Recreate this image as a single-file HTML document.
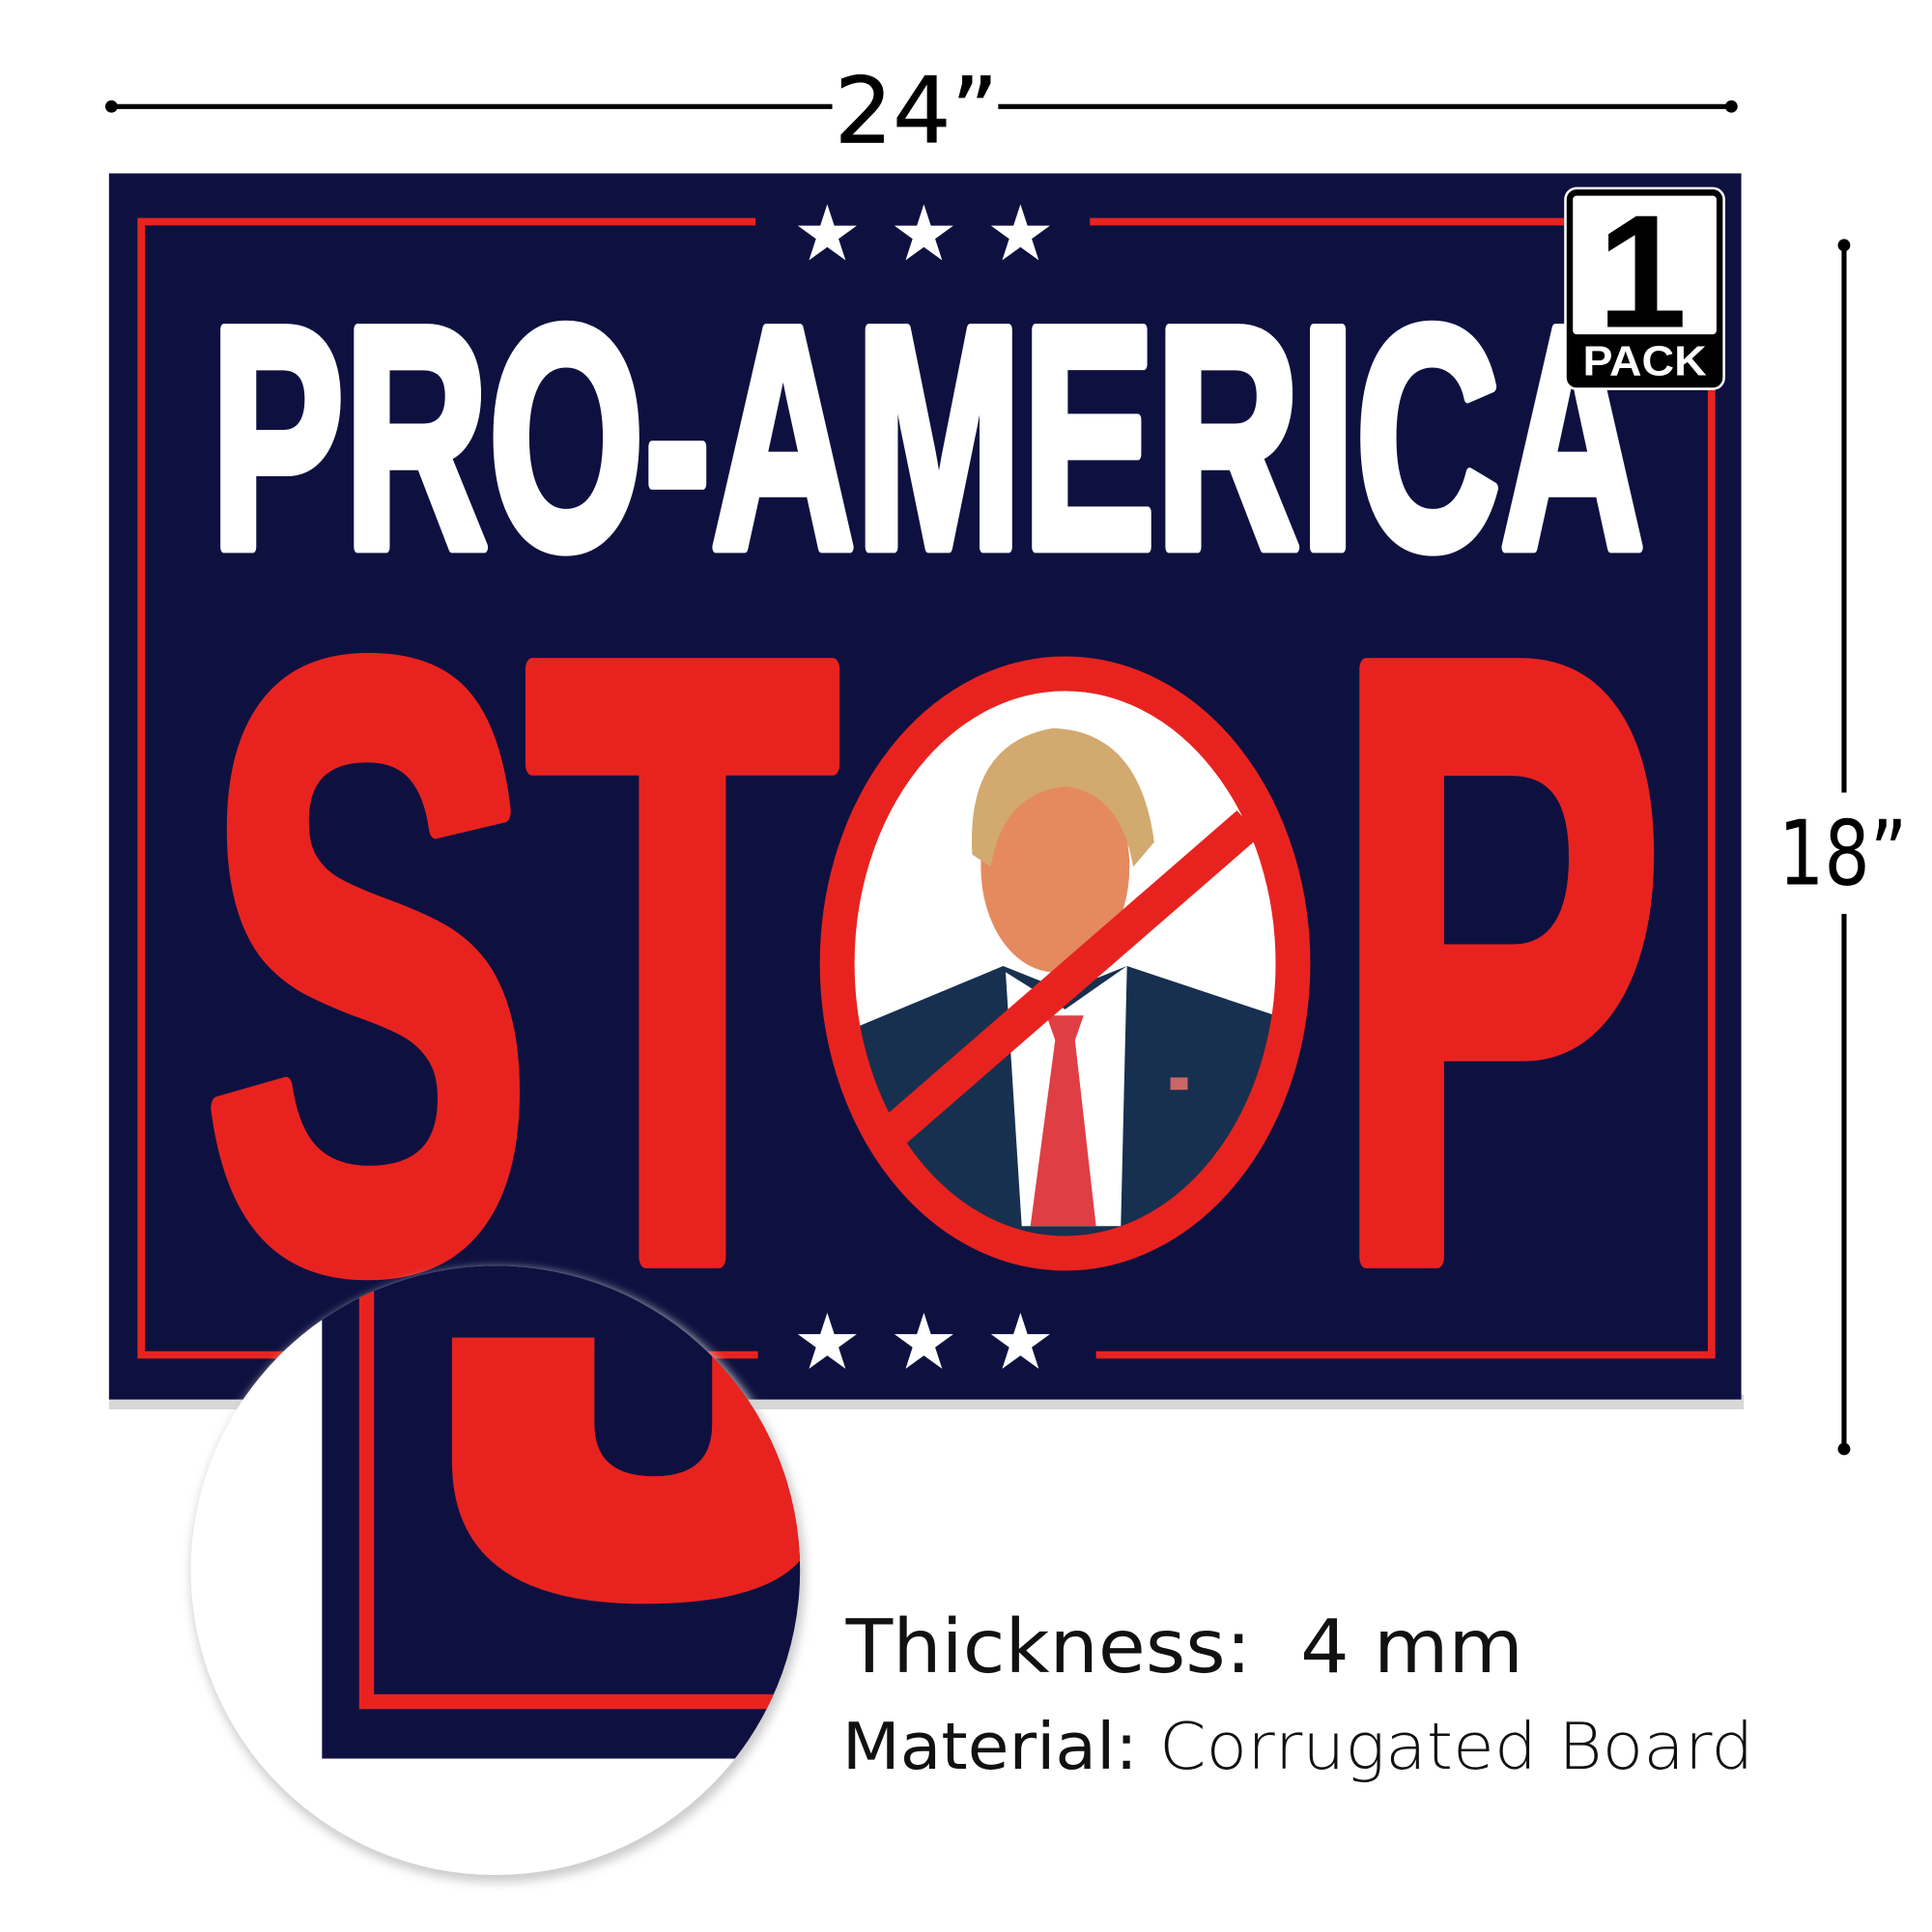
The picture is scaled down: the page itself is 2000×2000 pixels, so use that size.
<!DOCTYPE html>
<html><head><meta charset="utf-8"><style>
html,body{margin:0;padding:0;background:#fff;width:2000px;height:2000px;overflow:hidden}
svg{display:block}
</style></head><body>
<svg width="2000" height="2000" viewBox="0 0 1560 1560" xmlns="http://www.w3.org/2000/svg">
<defs>
<clipPath id="ov"><ellipse cx="860" cy="778" rx="185" ry="234"/></clipPath>
<clipPath id="mag"><circle cx="400" cy="1268" r="246"/></clipPath>
<filter id="sh" x="-20%" y="-20%" width="140%" height="140%"><feGaussianBlur stdDeviation="4"/></filter>
</defs>
<line x1="90" y1="86" x2="672" y2="86" stroke="#000" stroke-width="4"/>
<line x1="806" y1="86" x2="1398" y2="86" stroke="#000" stroke-width="4"/>
<circle cx="90" cy="86" r="5"/><circle cx="1398" cy="86" r="5"/>
<text x="740" y="115" font-family="DejaVu Sans, Liberation Sans, sans-serif" font-size="74" text-anchor="middle" fill="#000" stroke="#000" stroke-width="0.5">24”</text>
<line x1="1489" y1="198" x2="1489" y2="640" stroke="#000" stroke-width="4"/>
<line x1="1489" y1="738" x2="1489" y2="1170" stroke="#000" stroke-width="4"/>
<circle cx="1489" cy="198" r="5"/><circle cx="1489" cy="1170" r="5"/>
<text x="1488" y="714" textLength="104" lengthAdjust="spacingAndGlyphs" font-family="DejaVu Sans, Liberation Sans, sans-serif" font-size="72" text-anchor="middle" fill="#000">18”</text>
<rect x="88" y="1126" width="1320" height="12" fill="#d8d8d8"/>
<rect x="88" y="140" width="1318" height="990" fill="#0e1140"/>
<g fill="none" stroke="#e8231f" stroke-width="6">
<path d="M610 179 H114 V1094 H612"/>
<path d="M880 179 H1382 V1094 H885"/>
</g>
<g fill="#fff" font-family="DejaVu Sans, sans-serif" font-size="62" text-anchor="middle">
<text x="668" y="210">★</text><text x="746" y="210">★</text><text x="824" y="210">★</text>
<text x="668" y="1105">★</text><text x="746" y="1105">★</text><text x="824" y="1105">★</text>
</g>
<text x="170" y="442" textLength="1158" lengthAdjust="spacingAndGlyphs" font-family="Liberation Sans, Arial, sans-serif" font-weight="bold" font-size="256" fill="#fff" stroke="#fff" stroke-width="9" stroke-linejoin="round">PRO-AMERICA</text>
<g fill="#e8231f" stroke="#e8231f" stroke-width="18" stroke-linejoin="round" font-family="Liberation Sans, Arial, sans-serif" font-weight="bold" font-size="690">
<text x="164" y="1018" textLength="266" lengthAdjust="spacingAndGlyphs">S</text>
<text x="425" y="1015" textLength="252" lengthAdjust="spacingAndGlyphs">T</text>
<text x="1076" y="1015" textLength="268" lengthAdjust="spacingAndGlyphs">P</text>
</g>
<ellipse cx="860" cy="778" rx="185" ry="234" fill="#fff"/>
<g clip-path="url(#ov)">
<path d="M690 830 L810 780 L860 800 L910 780 L1030 820 L1040 1020 L680 1020Z" fill="#17304f"/>
<path d="M812 785 L860 815 L910 780 L905 990 L825 990Z" fill="#fff"/>
<path d="M845 820 L875 820 L868 840 L885 990 L832 990 L852 840Z" fill="#df3e45"/>
<ellipse cx="852" cy="700" rx="60" ry="85" fill="#e58a5e"/>
<path d="M785 690 Q780 600 850 588 Q920 590 932 680 L915 700 Q905 640 860 635 Q810 640 800 700Z" fill="#d2a96f"/>
<rect x="945" y="870" width="14" height="10" fill="#c66"/>
</g>
<ellipse cx="860" cy="778" rx="184" ry="234" fill="none" stroke="#e8231f" stroke-width="28"/>
<line x1="1008" y1="665" x2="720" y2="915" stroke="#e8231f" stroke-width="28"/>
<rect x="1264" y="152" width="128" height="162" rx="9" fill="#000" stroke="#fff" stroke-width="2"/>
<rect x="1270" y="158" width="116" height="112" rx="3" fill="#fff"/>
<text x="1326" y="264" font-family="Liberation Sans, Arial, sans-serif" font-weight="bold" font-size="130" text-anchor="middle" fill="#000">1</text>
<text x="1328" y="303" textLength="100" lengthAdjust="spacingAndGlyphs" font-family="Liberation Sans, Arial, sans-serif" font-weight="bold" font-size="34" text-anchor="middle" fill="#fff">PACK</text>
<circle cx="402" cy="1272" r="248" fill="#ccc" filter="url(#sh)"/>
<circle cx="400" cy="1268" r="246" fill="#fff"/>
<g clip-path="url(#mag)">
<rect x="260" y="1020" width="420" height="400" fill="#0e1140"/>
<path d="M296 1020 V1374 H680" fill="none" stroke="#e8231f" stroke-width="12"/>
<path d="M365 1080 H480 V1150 Q480 1192 528 1192 Q575 1192 575 1150 V1060 L660 1060 V1230 Q650 1295 520 1295 Q365 1295 365 1180Z" fill="#e8231f"/>
</g>
<text x="683" y="1350" textLength="547" lengthAdjust="spacingAndGlyphs" font-family="DejaVu Sans, Liberation Sans, sans-serif" font-size="60" fill="#111" xml:space="preserve">Thickness:  4 mm</text>
<text x="680" y="1428" textLength="736" lengthAdjust="spacingAndGlyphs" font-family="DejaVu Sans, Liberation Sans, sans-serif" font-size="52" fill="#111">Material: <tspan font-weight="300">Corrugated Board</tspan></text>
</svg>
</body></html>
